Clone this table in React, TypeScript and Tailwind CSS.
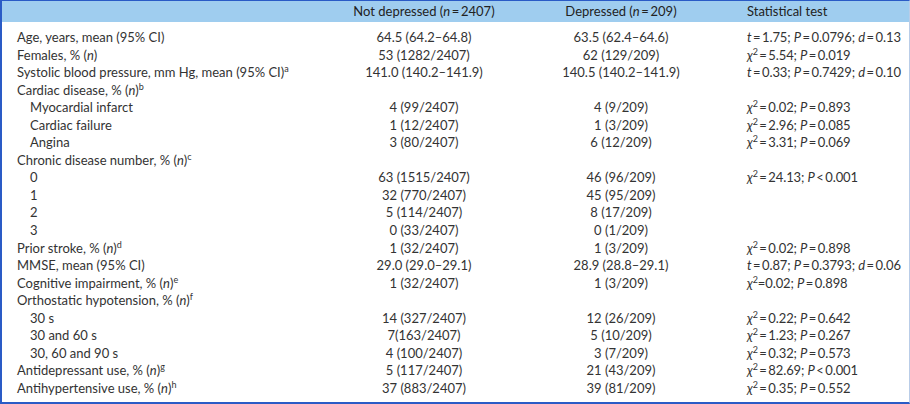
import React from 'react';

type Row = {
  label: React.ReactNode;
  sub?: boolean;
  nd?: string;
  d?: string;
  test?: React.ReactNode;
};

const I = ({ children }: { children: React.ReactNode }) => <i>{children}</i>;
const Sup = ({ children }: { children: React.ReactNode }) => (
  <sup className="text-[9px] -top-[5px]">{children}</sup>
);
const Chi = () => (
  <>
    <i>χ</i>
    <sup className="text-[9px] -top-[5px]">2</sup>
  </>
);
const eq = '\u2009=\u2009';
const lt = '\u2009<\u2009';

const tTest = (t: string, p: string, d: string) => (
  <>
    <I>t</I>
    {eq}
    {t}; <I>P</I>
    {eq}
    {p}; <I>d</I>
    {eq}
    {d}
  </>
);
const chi = (x: string, p: string, less = false, tight = false) => (
  <>
    <Chi />
    {tight ? '=' : eq}
    {x}; <I>P</I>
    {less ? lt : eq}
    {p}
  </>
);
const pctN = (s: string, sup?: string) => (
  <>
    {s}, % (<I>n</I>){sup && <Sup>{sup}</Sup>}
  </>
);

const rows: Row[] = [
  { label: 'Age, years, mean (95% CI)', nd: '64.5 (64.2–64.8)', d: '63.5 (62.4–64.6)', test: tTest('1.75', '0.0796', '0.13') },
  { label: pctN('Females'), nd: '53 (1282/2407)', d: '62 (129/209)', test: chi('5.54', '0.019') },
  {
    label: (
      <>
        Systolic blood pressure, mm Hg, mean (95% CI)<Sup>a</Sup>
      </>
    ),
    nd: '141.0 (140.2–141.9)',
    d: '140.5 (140.2–141.9)',
    test: tTest('0.33', '0.7429', '0.10'),
  },
  { label: pctN('Cardiac disease', 'b') },
  { label: 'Myocardial infarct', sub: true, nd: '4 (99/2407)', d: '4 (9/209)', test: chi('0.02', '0.893') },
  { label: 'Cardiac failure', sub: true, nd: '1 (12/2407)', d: '1 (3/209)', test: chi('2.96', '0.085') },
  { label: 'Angina', sub: true, nd: '3 (80/2407)', d: '6 (12/209)', test: chi('3.31', '0.069') },
  { label: pctN('Chronic disease number', 'c') },
  { label: '0', sub: true, nd: '63 (1515/2407)', d: '46 (96/209)', test: chi('24.13', '0.001', true) },
  { label: '1', sub: true, nd: '32 (770/2407)', d: '45 (95/209)' },
  { label: '2', sub: true, nd: '5 (114/2407)', d: '8 (17/209)' },
  { label: '3', sub: true, nd: '0 (33/2407)', d: '0 (1/209)' },
  { label: pctN('Prior stroke', 'd'), nd: '1 (32/2407)', d: '1 (3/209)', test: chi('0.02', '0.898') },
  { label: 'MMSE, mean (95% CI)', nd: '29.0 (29.0–29.1)', d: '28.9 (28.8–29.1)', test: tTest('0.87', '0.3793', '0.06') },
  { label: pctN('Cognitive impairment', 'e'), nd: '1 (32/2407)', d: '1 (3/209)', test: chi('0.02', '0.898', false, true) },
  { label: pctN('Orthostatic hypotension', 'f') },
  { label: '30 s', sub: true, nd: '14 (327/2407)', d: '12 (26/209)', test: chi('0.22', '0.642') },
  { label: '30 and 60 s', sub: true, nd: '7(163/2407)', d: '5 (10/209)', test: chi('1.23', '0.267') },
  { label: '30, 60 and 90 s', sub: true, nd: '4 (100/2407)', d: '3 (7/209)', test: chi('0.32', '0.573') },
  { label: pctN('Antidepressant use', 'g'), nd: '5 (117/2407)', d: '21 (43/209)', test: chi('82.69', '0.001', true) },
  { label: pctN('Antihypertensive use', 'h'), nd: '37 (883/2407)', d: '39 (81/209)', test: chi('0.35', '0.552') },
];

const cols = 'grid grid-cols-[309px_196px_198px_1fr]';

export default function App() {
  return (
    <div
      className="w-[910px] h-[404px] bg-white text-[#333333] text-[13px] border-t border-b-2 border-l-2 border-r border-t-[#2a5bc6] border-b-[#2a5bc6] border-l-[#2a5bc6] border-r-[#b9cde8] overflow-hidden"
      style={{ fontFamily: 'Lato, "Open Sans", sans-serif' }}
    >
      <div className={`${cols} h-[21px] items-center bg-[#9fcdef] pl-[15px] text-[#222222]`}>
        <div />
        <div className="text-center">
          Not depressed (<I>n</I>
          {eq}2407)
        </div>
        <div className="text-center">
          Depressed (<I>n</I>
          {eq}209)
        </div>
        <div className="pl-[27px]">Statistical test</div>
      </div>
      <div className="pt-[6px]">
        {rows.map((r, i) => (
          <div key={i} className={`${cols} h-[17.55px] items-center pl-[15px] whitespace-nowrap`}>
            <div className={r.sub ? 'pl-[13px]' : ''}>{r.label}</div>
            <div className="text-center">{r.nd}</div>
            <div className="text-center">{r.d}</div>
            <div className="pl-[27px] tracking-[-0.1px]">{r.test}</div>
          </div>
        ))}
      </div>
    </div>
  );
}
